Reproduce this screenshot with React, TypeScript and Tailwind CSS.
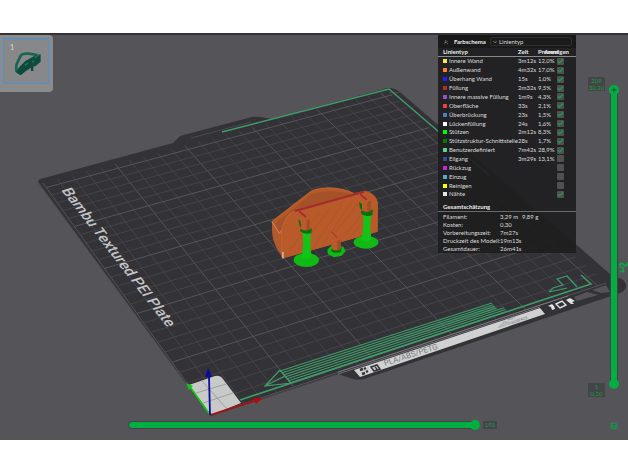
import React, { useState } from "react";
import { Check, ChevronDown, ChevronsUp, Layers } from "lucide-react";

type LineType = {
  name: string;
  color: string;
  time?: string;
  percent?: string;
  visible: boolean;
};

const lineTypes: LineType[] = [
  { name: "Innere Wand", color: "bg-[#ffe64d]", time: "3m12s", percent: "12,0%", visible: true },
  { name: "Außenwand", color: "bg-[#ff7d38]", time: "4m32s", percent: "17,0%", visible: true },
  { name: "Überhang Wand", color: "bg-[#1f1fff]", time: "15s", percent: "1,0%", visible: true },
  { name: "Füllung", color: "bg-[#b03029]", time: "2m32s", percent: "9,5%", visible: true },
  { name: "Innere massive Füllung", color: "bg-[#9654cc]", time: "1m9s", percent: "4,3%", visible: true },
  { name: "Oberfläche", color: "bg-[#f04040]", time: "33s", percent: "2,1%", visible: true },
  { name: "Überbrückung", color: "bg-[#4d80ba]", time: "23s", percent: "1,5%", visible: true },
  { name: "Lückenfüllung", color: "bg-white", time: "24s", percent: "1,6%", visible: true },
  { name: "Stützen", color: "bg-[#00ff00]", time: "2m12s", percent: "8,3%", visible: true },
  { name: "Stützstruktur-Schnittstelle", color: "bg-[#008000]", time: "28s", percent: "1,7%", visible: true },
  { name: "Benutzerdefiniert", color: "bg-[#5ed194]", time: "7m42s", percent: "28,9%", visible: true },
  { name: "Eilgang", color: "bg-[#38489b]", time: "3m29s", percent: "13,1%", visible: false },
  { name: "Rückzug", color: "bg-[#cd22d6]", visible: false },
  { name: "Einzug", color: "bg-[#49adcf]", visible: false },
  { name: "Reinigen", color: "bg-[#ffff00]", visible: false },
  { name: "Nähte", color: "bg-[#e6e6e6]", visible: true },
];

const totals = [
  ["Filament:", "3,29 m", "9,89 g"],
  ["Kosten:", "0,30", ""],
  ["Vorbereitungszeit:", "7m27s", ""],
  ["Druckzeit des Modell:", "19m13s", ""],
  ["Gesamtdauer:", "26m41s", ""],
];

// bed corners on screen: front left, front right, back right, back left
const bed = [
  [210, 415],
  [606, 283],
  [388, 91],
  [43, 183],
];

// perspective mapping of bed coordinates (0..1) to the screen
function project(u: number, v: number) {
  const [[x0, y0], [x1, y1], [x2, y2], [x3, y3]] = bed;
  const dx1 = x1 - x2;
  const dx2 = x3 - x2;
  const dx3 = x0 - x1 + x2 - x3;
  const dy1 = y1 - y2;
  const dy2 = y3 - y2;
  const dy3 = y0 - y1 + y2 - y3;
  const det = dx1 * dy2 - dx2 * dy1;
  const g = (dx3 * dy2 - dx2 * dy3) / det;
  const h = (dx1 * dy3 - dx3 * dy1) / det;
  const w = g * u + h * v + 1;
  return [
    ((x1 - x0 + g * x1) * u + (x3 - x0 + h * x3) * v + x0) / w,
    ((y1 - y0 + g * y1) * u + (y3 - y0 + h * y3) * v + y0) / w,
  ];
}

function segment(u1: number, v1: number, u2: number, v2: number) {
  return `M${project(u1, v1).join(" ")}L${project(u2, v2).join(" ")}`;
}

function Grid() {
  const steps = Array.from({ length: 26 }, (_, i) => i);
  return (
    <g fill="none">
      {steps.map((i) => (
        <path
          key={i}
          d={segment(i / 25.6, 0, i / 25.6, 1) + segment(0, i / 25.6, 1, i / 25.6)}
          stroke={i % 5 === 0 ? "#55545a" : "#48474c"}
          strokeWidth={i % 5 === 0 ? 1 : 0.8}
        />
      ))}
    </g>
  );
}

function Plate() {
  return (
    <g>
      <path
        d="M38 182Q38 179 44 178L173 143L180 136L248 118Q254 116 260 117L272 119L384 89Q392 86 400 92L609 273L613 278Q622 276 626 284Q627 290 620 293L364 379Q356 381 350 378L338 374L210 416Z"
        fill="#333237"
      />
      <path d="M38 182L210 416L338 374" fill="none" stroke="#464549" strokeWidth="1" />
      <path d="M191 138L251 122M389 93L400 92" stroke="#4f4e53" strokeWidth="0.8" />
      <Grid />
      <path d="M574 297L587 292L598 295L577 301Z" fill="#555459" />
      <path d="M592 290L606 285L610 292L601 293Z" fill="#555459" />
      <path d="M338 372L568 296M338 374L540 307" stroke="#8c8c90" strokeWidth="0.7" fill="none" />

      {/* label strip on the front edge */}
      <path d="M354 370L540 308L545 314L360 377Z" fill="#d0d2d1" />
      <path d="M498 328L504 321L512 323Z" fill="#b9bbba" stroke="#a3a5a4" strokeWidth="0.5" />
      <g fill="none" stroke="#333237" strokeWidth="1.5">
        <path d="M360 370L363 369M362 374L365 373M364 369L366 368M366 372L368 371" strokeWidth="2.4" />
        <path d="M371 367L377 365L380 369L374 371ZM375 367L377 369" />
      </g>
      <text
        transform="translate(385 366) rotate(-18)"
        fontSize="8"
        fill="#77797a"
        fontFamily="Roboto, sans-serif"
      >
        PLA/ABS/PETG
      </text>
      <g fontSize="4" fill="#77797a" fontFamily="Roboto, sans-serif">
        <text transform="translate(508 321) rotate(-18)">HOT</text>
        <text transform="translate(512 324) rotate(-18)">SURFACE</text>
      </g>
      <path d="M548 306L552 304L554 306L555 309L552 310L551 307ZM566 300L570 298L575 301L572 302L574 304L571 304Z" fill="#e2e3e3" />
      <path d="M556 304L562 301L566 305L560 308Z" fill="none" stroke="#e2e3e3" strokeWidth="1.4" />

      <text
        transform="matrix(0.61 0.79 -0.95 0.31 61 190)"
        fontSize="15"
        fontWeight="500"
        fill="#c4c4c6"
        fontFamily="Roboto, sans-serif"
      >
        Bambu Textured PEI Plate
      </text>
    </g>
  );
}

function PurgeLines() {
  return (
    <g fill="none" stroke="#3f9c69" strokeWidth="1.2">
      <path d="M222 132L389 89L489 175" strokeWidth="1.5" />
      <path d="M240 400L591 284L581 275" strokeWidth="1.6" />
      {[0, 1, 2, 3, 4, 5, 6].map((i) => (
        <path
          key={i}
          d={`M${280 + i * 1.6} ${371 + i * 2}L${i < 4 ? 492 + i * 1.5 : 498 + i * 1.5} ${303 + i * 1.7 - (i < 4 ? 0 : 2)}`}
        />
      ))}
      <path d="M280 370L265 386L291 383L280 370M265 386L285 376" />
      <path d="M549 292L553 288L563 285L557 279L567 276L577 287M549 292L567 288" />
    </g>
  );
}

function Model() {
  return (
    <g transform="translate(250 170) scale(0.3333)">
      <path
        d="M66 155L178 68Q192 56 235 54Q280 55 310 70L345 62Q375 66 384 100L383 185L100 265L82 238Q66 210 66 180Z"
        fill="#b3592a"
      />
      <path d="M76 160L184 73Q235 55 308 72L135 123Q108 140 97 180L88 190Z" fill="#a65228" />
      <path d="M66 155L178 68Q192 56 235 54Q280 55 310 70" fill="none" stroke="#bd5f2c" strokeWidth="4" />
      <path d="M97 265L95 190Q100 130 135 123L345 65Q384 72 384 105L383 185Z" fill="#b85a29" />
      <path
        d="M120 240L210 125M145 240L240 115M185 240L275 105M215 230L305 95M245 200L325 100M280 200L330 140M300 200L330 165"
        fill="none"
        stroke="#b05529"
        strokeWidth="3"
      />
      <path d="M66 155L88 190L97 178" fill="none" stroke="#cf8660" strokeWidth="3" />
      <path d="M96 262L95 190Q98 145 130 125" fill="none" stroke="#c0622e" strokeWidth="4" />
      <path d="M99 266V246" stroke="#efe2da" strokeWidth="3" />
      <path d="M135 123L342 65" stroke="#a32a2e" strokeWidth="6" />

      {/* supports */}
      <ellipse cx="169" cy="270" rx="38" ry="21" fill="#11b914" />
      <path d="M157 180L184 184Q178 215 185 262Q170 270 154 262Q163 225 157 180Z" fill="#12c415" />
      <path d="M150 177L186 176L184 190Q166 194 152 185ZM145 148L154 155L155 175L149 168Z" fill="#0b6e10" />
      <path d="M143 127L162 122L180 143V178Q165 186 153 176L152 152Z" fill="#b85a29" />
      <path d="M148 124L168 141" stroke="#a32a2e" strokeWidth="5" />
      <path d="M170 150L179 146V178L170 181Z" fill="#9f4e25" />

      <ellipse cx="348" cy="217" rx="37" ry="19" fill="#11b914" />
      <path d="M338 128L365 130Q357 165 365 209Q349 217 333 209Q344 170 338 128Z" fill="#12c415" />
      <path d="M333 122L369 119L367 135Q350 142 334 132ZM327 96L336 103L338 122L330 115Z" fill="#0b6e10" />
      <path d="M326 78L344 70L362 90V122Q348 131 336 120V100Z" fill="#b85a29" />
      <path d="M331 73L350 89" stroke="#a32a2e" strokeWidth="5" />
      <path d="M352 96L362 92V122L352 126Z" fill="#9f4e25" />

      <path d="M232 240L245 226L280 230L287 243L275 257L252 262L234 253Z" fill="#11b914" />
      <path d="M244 236L275 232L273 246Q255 252 244 244Z" fill="#0b6e10" />
      <path d="M235 190L250 184L272 208V236Q259 247 246 237V212L237 205Z" fill="#b85a29" />
      <path d="M244 185L262 203" stroke="#b53a35" strokeWidth="4" />
      <path d="M262 212L272 208V236L262 241Z" fill="#9f4e25" />
    </g>
  );
}

function Axes() {
  return (
    <g>
      <path d="M189 385L215 376Q220 375 223 379L241 403L211 415Z" fill="#c8cac9" />
      <path d="M196 393L226 384M203 403L233 393M202 381L227 409" fill="none" stroke="#949696" strokeWidth="0.8" />
      <path d="M210 415L190 387" stroke="#13c613" strokeWidth="1.8" />
      <path d="M186 383L193 386L189 390Z" fill="#13c613" />
      <path d="M210 415L254 401" stroke="#b30b0b" strokeWidth="1.8" />
      <path d="M263 398L253 398L256 404Z" fill="#b30b0b" />
      <path d="M210 415L209 376" stroke="#0a0aa0" strokeWidth="1.8" />
      <path d="M208 368L205 377H212Z" fill="#0a0aa0" />
    </g>
  );
}

function Scene() {
  return (
    <svg
      className="block h-full w-full"
      viewBox="0 33 628 407"
      preserveAspectRatio="xMidYMid slice"
      aria-hidden="true"
    >
      <Plate />
      <PurgeLines />
      <Model />
      <Axes />
      <path
        d="M619 265Q622 262 624 265T628 262M620 271Q625 273 623 268L620 266"
        fill="none"
        stroke="#0aa846"
        strokeWidth="1.8"
      />
    </svg>
  );
}

function PlateThumbnail() {
  return (
    <div className="absolute left-0 top-0.5 rounded-r-sm bg-[#8b8a8d] pt-[3px] pr-1 pb-2 pl-[3px]">
      <button
        aria-label="Platte 1"
        className="relative block size-[46px] rounded-xs border border-[#4793d6] bg-[#88878a]"
      >
        <span className="absolute left-1.5 top-1 text-[7px] leading-2 text-[#dcdcdc]">1</span>
        <svg viewBox="0 0 90 80" className="absolute left-2.5 top-3 w-[30px]" aria-hidden="true">
          <path
            d="M18 68L7 60V42L20 14Q25 7 44 8L70 12"
            fill="none"
            stroke="#176655"
            strokeWidth="8"
            strokeLinejoin="round"
          />
          <path d="M20 73L6 63L16 48L34 30L66 12L80 10V32L66 44L58 47V60H51V50L36 60Z" fill="#0f4a3e" />
          <path d="M32 43L42 36M62 20L74 12M54 34L60 30" stroke="#237a66" strokeWidth="4" />
        </svg>
      </button>
    </div>
  );
}

function Legend() {
  const [rows, setRows] = useState(lineTypes);

  const toggle = (name: string) =>
    setRows(rows.map((r) => (r.name === name ? { ...r, visible: !r.visible } : r)));

  return (
    <aside className="absolute right-[52px] top-0.5 w-[138px] bg-[#1d1d1e]/90 text-[6px] leading-2 text-[#dcdcdc]">
      <div className="flex h-[13px] items-center bg-[#191919] pr-1 pl-[5px]">
        <button aria-label="Einklappen" className="w-[11px]">
          <ChevronsUp className="size-[6px]" />
        </button>
        <label htmlFor="scheme" className="w-9 font-bold text-[#ececec]">
          Farbschema
        </label>
        <div className="relative flex-1">
          <ChevronDown className="pointer-events-none absolute left-0.5 top-0.5 size-[6px]" />
          <select
            id="scheme"
            className="block h-[9px] w-full appearance-none rounded-xs border border-[#303030] bg-[#1b1b1b] pl-2 text-[6px] leading-[7px]"
          >
            <option>Linientyp</option>
          </select>
        </div>
      </div>

      <table className="h-[151px] w-full table-fixed whitespace-nowrap">
        <colgroup>
          <col className="w-20" />
          <col className="w-5" />
          <col className="w-[19px]" />
          <col />
        </colgroup>
        <thead>
          <tr className="border-b border-[#8a8a8a] text-left text-[#ececec]">
            <th className="p-0 pl-[5px]">Linientyp</th>
            <th className="p-0">Zeit</th>
            <th className="p-0">Prozent</th>
            <th className="p-0 pr-[7px]">
              <div className="flex justify-end">Anzeigen</div>
            </th>
          </tr>
        </thead>
        <tbody>
          {rows.map((row) => (
            <tr key={row.name}>
              <td className="p-0 pl-[5px]">
                <div className="flex items-center gap-0.5">
                  <span className={`size-1 shrink-0 ${row.color}`} />
                  {row.name}
                </div>
              </td>
              <td className="p-0">{row.time}</td>
              <td className="p-0">{row.percent}</td>
              <td className="p-0">
                <label className="relative block size-[7px]">
                  <input
                    type="checkbox"
                    aria-label={row.name}
                    checked={row.visible}
                    onChange={() => toggle(row.name)}
                    className="peer block size-[7px] appearance-none rounded-[1px] bg-[#505052]"
                  />
                  <Check
                    strokeWidth={4}
                    className="absolute inset-0 hidden size-[7px] text-[#12a34b] peer-checked:block"
                  />
                </label>
              </td>
            </tr>
          ))}
        </tbody>
      </table>

      <h2 className="mt-1 border-b border-[#6a6a6a] pl-[5px] font-bold text-[#ececec]">Gesamtschätzung</h2>
      <table className="mt-px w-full table-fixed whitespace-nowrap">
        <tbody>
          {totals.map(([label, value, weight]) => (
            <tr key={label}>
              <th className="w-[62px] p-0 pl-[5px] text-left font-normal">{label}</th>
              <td className="w-[22px] p-0">{value}</td>
              <td className="p-0">{weight}</td>
            </tr>
          ))}
        </tbody>
      </table>
    </aside>
  );
}

function LayerSlider() {
  const [top, setTop] = useState(209);
  const [bottom, setBottom] = useState(1);
  const range =
    "absolute inset-0 h-full w-[10px] appearance-none bg-transparent pointer-events-none [writing-mode:vertical-lr] [direction:rtl] [&::-webkit-slider-thumb]:pointer-events-auto [&::-webkit-slider-thumb]:size-[10px] [&::-webkit-slider-thumb]:appearance-none [&::-webkit-slider-thumb]:rounded-full [&::-webkit-slider-thumb]:bg-[#00ae42]";

  return (
    <div className="absolute top-[52px] right-[9px] bottom-[51px] flex gap-1 text-center text-[6px] leading-[7px] text-[#12a043]">
      <div className="flex flex-col justify-between -my-2">
        <output className="w-[17px] bg-[#454448]">
          209
          <br />
          30,20
        </output>
        <output className="w-[17px] bg-[#454448]">
          1
          <br />
          0,20
        </output>
      </div>
      <div className="relative w-[10px]">
        <div className="mx-auto h-full w-2 rounded-full border border-[#434246] bg-[#00ae42]" />
        <input
          type="range"
          aria-label="Oberste Schicht"
          min={1}
          max={209}
          value={top}
          onChange={(e) => setTop(Number(e.target.value))}
          className={range}
        />
        <input
          type="range"
          aria-label="Unterste Schicht"
          min={1}
          max={209}
          value={bottom}
          onChange={(e) => setBottom(Number(e.target.value))}
          className={range}
        />
        <svg viewBox="0 0 10 10" className="pointer-events-none absolute inset-x-0 top-0 size-[10px]">
          <path d="M5 2.5V7.5M2.5 5H7.5" stroke="#0b5a2a" strokeWidth="1" />
        </svg>
      </div>
    </div>
  );
}

function MoveSlider() {
  const [move, setMove] = useState(193);
  return (
    <div className="absolute right-[131px] bottom-[10px] left-[128px] flex items-center gap-[3px]">
      <div className="relative h-[10px] flex-1">
        <div className="my-px h-2 rounded-full border border-[#434246] bg-[#00ae42]" />
        <input
          type="range"
          aria-label="Bewegung"
          min={0}
          max={193}
          value={move}
          onChange={(e) => setMove(Number(e.target.value))}
          className="absolute inset-0 h-full w-full appearance-none bg-transparent [&::-webkit-slider-thumb]:size-[10px] [&::-webkit-slider-thumb]:appearance-none [&::-webkit-slider-thumb]:rounded-full [&::-webkit-slider-thumb]:bg-[#00ae42]"
        />
      </div>
      <output className="w-[14px] bg-[#454448] text-center text-[6px] leading-2 text-[#12a043]">{move}</output>
    </div>
  );
}

export default function App() {
  return (
    <div className="flex h-screen flex-col bg-white pt-[33px] pb-8 font-['Lato',sans-serif]">
      <main className="relative min-h-0 flex-1 overflow-hidden bg-[#555459]">
        <Scene />
        <div className="absolute inset-x-0 top-0 h-0.5 bg-[#343338]" />
        <PlateThumbnail />
        <Legend />
        <LayerSlider />
        <MoveSlider />
        <button aria-label="Schichten" className="absolute right-2.5 bottom-[10px] text-[#0fa247]">
          <Layers className="size-2" strokeWidth={3} />
        </button>
      </main>
    </div>
  );
}
